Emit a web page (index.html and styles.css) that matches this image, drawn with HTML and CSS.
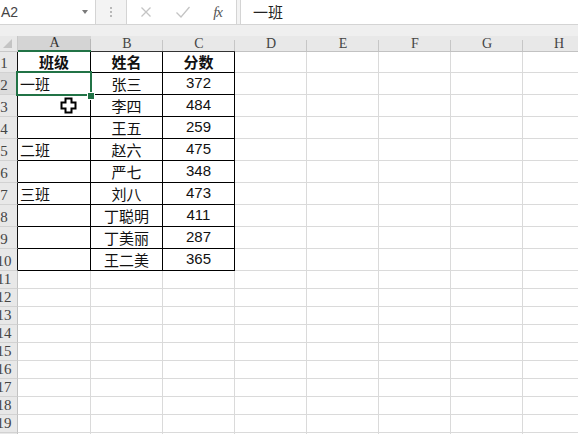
FILE: index.html
```html
<!DOCTYPE html>
<html lang="zh-CN">
<head>
<meta charset="utf-8">
<title>Excel</title>
<link rel="stylesheet" href="styles.css">
</head>
<body>
<div class="app">
  <div class="fbar">
    <div class="namebox"><span class="ref">A2</span><span class="dd"></span></div>
    <div class="grip"><i></i><i></i><i></i></div>
    <div class="fbtns">
      <svg class="ic" width="14" height="14" viewBox="0 0 14 14"><path d="M2.5 2.5l9 9M11.5 2.5l-9 9" stroke="#c4c4c4" stroke-width="1.3" fill="none"/></svg>
      <svg class="ic" width="16" height="14" viewBox="0 0 16 14"><path d="M1.5 7.5l4.5 4.5L14.5 2" stroke="#c4c4c4" stroke-width="1.3" fill="none"/></svg>
      <span class="fx">fx</span>
    </div>
    <div class="finput">一班</div>
  </div>
  <div class="band"></div>
  <div class="sheet">
    <div class="row hd">
      <div class="corner"><span class="tri"></span></div>
      <div class="ch sel">A</div><div class="ch tb">B</div><div class="ch tb">C</div><div class="ch">D</div><div class="ch">E</div><div class="ch">F</div><div class="ch">G</div><div class="ch">H</div>
    </div>
    <div class="row r1">
      <div class="rh tb"><span>1</span></div>
      <div class="c t ctr b">班级</div><div class="c t ctr b">姓名</div><div class="c t ctr b">分数</div><div class="c"></div><div class="c"></div><div class="c"></div><div class="c"></div><div class="c"></div>
    </div>
    <div class="row">
      <div class="rh tb rsel"><span>2</span></div>
      <div class="c t">一班</div><div class="c t ctr">张三</div><div class="c t ctr num">372</div><div class="c"></div><div class="c"></div><div class="c"></div><div class="c"></div><div class="c"></div>
    </div>
    <div class="row">
      <div class="rh tb"><span>3</span></div>
      <div class="c t"></div><div class="c t ctr">李四</div><div class="c t ctr num">484</div><div class="c"></div><div class="c"></div><div class="c"></div><div class="c"></div><div class="c"></div>
    </div>
    <div class="row">
      <div class="rh tb"><span>4</span></div>
      <div class="c t"></div><div class="c t ctr">王五</div><div class="c t ctr num">259</div><div class="c"></div><div class="c"></div><div class="c"></div><div class="c"></div><div class="c"></div>
    </div>
    <div class="row">
      <div class="rh tb"><span>5</span></div>
      <div class="c t">二班</div><div class="c t ctr">赵六</div><div class="c t ctr num">475</div><div class="c"></div><div class="c"></div><div class="c"></div><div class="c"></div><div class="c"></div>
    </div>
    <div class="row">
      <div class="rh tb"><span>6</span></div>
      <div class="c t"></div><div class="c t ctr">严七</div><div class="c t ctr num">348</div><div class="c"></div><div class="c"></div><div class="c"></div><div class="c"></div><div class="c"></div>
    </div>
    <div class="row">
      <div class="rh tb"><span>7</span></div>
      <div class="c t">三班</div><div class="c t ctr">刘八</div><div class="c t ctr num">473</div><div class="c"></div><div class="c"></div><div class="c"></div><div class="c"></div><div class="c"></div>
    </div>
    <div class="row">
      <div class="rh tb"><span>8</span></div>
      <div class="c t"></div><div class="c t ctr">丁聪明</div><div class="c t ctr num">411</div><div class="c"></div><div class="c"></div><div class="c"></div><div class="c"></div><div class="c"></div>
    </div>
    <div class="row">
      <div class="rh tb"><span>9</span></div>
      <div class="c t"></div><div class="c t ctr">丁美丽</div><div class="c t ctr num">287</div><div class="c"></div><div class="c"></div><div class="c"></div><div class="c"></div><div class="c"></div>
    </div>
    <div class="row">
      <div class="rh tb"><span>10</span></div>
      <div class="c t"></div><div class="c t ctr">王二美</div><div class="c t ctr num">365</div><div class="c"></div><div class="c"></div><div class="c"></div><div class="c"></div><div class="c"></div>
    </div>
    <div class="row sm"><div class="rh"><span>11</span></div><div class="c"></div><div class="c"></div><div class="c"></div><div class="c"></div><div class="c"></div><div class="c"></div><div class="c"></div><div class="c"></div></div>
    <div class="row sm"><div class="rh"><span>12</span></div><div class="c"></div><div class="c"></div><div class="c"></div><div class="c"></div><div class="c"></div><div class="c"></div><div class="c"></div><div class="c"></div></div>
    <div class="row sm"><div class="rh"><span>13</span></div><div class="c"></div><div class="c"></div><div class="c"></div><div class="c"></div><div class="c"></div><div class="c"></div><div class="c"></div><div class="c"></div></div>
    <div class="row sm"><div class="rh"><span>14</span></div><div class="c"></div><div class="c"></div><div class="c"></div><div class="c"></div><div class="c"></div><div class="c"></div><div class="c"></div><div class="c"></div></div>
    <div class="row sm"><div class="rh"><span>15</span></div><div class="c"></div><div class="c"></div><div class="c"></div><div class="c"></div><div class="c"></div><div class="c"></div><div class="c"></div><div class="c"></div></div>
    <div class="row sm"><div class="rh"><span>16</span></div><div class="c"></div><div class="c"></div><div class="c"></div><div class="c"></div><div class="c"></div><div class="c"></div><div class="c"></div><div class="c"></div></div>
    <div class="row sm"><div class="rh"><span>17</span></div><div class="c"></div><div class="c"></div><div class="c"></div><div class="c"></div><div class="c"></div><div class="c"></div><div class="c"></div><div class="c"></div></div>
    <div class="row sm"><div class="rh"><span>18</span></div><div class="c"></div><div class="c"></div><div class="c"></div><div class="c"></div><div class="c"></div><div class="c"></div><div class="c"></div><div class="c"></div></div>
    <div class="row sm"><div class="rh"><span>19</span></div><div class="c"></div><div class="c"></div><div class="c"></div><div class="c"></div><div class="c"></div><div class="c"></div><div class="c"></div><div class="c"></div></div>
    <div class="row sm"><div class="rh"><span>20</span></div><div class="c"></div><div class="c"></div><div class="c"></div><div class="c"></div><div class="c"></div><div class="c"></div><div class="c"></div><div class="c"></div></div>

    <div class="selbox"></div>
    <div class="handle"></div>
    <svg class="cursor" width="17" height="17" viewBox="0 0 17 17"><path d="M5.5 1.5h6v4h4v6h-4v4h-6v-4h-4v-6h4z" fill="#fff" stroke="#000" stroke-width="2" stroke-linejoin="miter"/></svg>
  </div>
</div>
</body>
</html>
```

FILE: styles.css
```css
html, body {
  margin: 0;
  padding: 0;
  background: #fff;
}
.app {
  width: 578px;
  height: 434px;
  overflow: hidden;
  position: relative;
  font-family: "Noto Sans CJK SC", "Liberation Sans", sans-serif;
}
.fbar {
  display: flex;
  height: 25px;
  background: #f3f3f3;
  box-sizing: border-box;
  border-bottom: 1px solid #d4d4d4;
}
.namebox {
  width: 96px;
  flex: none;
  background: #fff;
  border-right: 1px solid #d4d4d4;
  display: flex;
  align-items: center;
  justify-content: space-between;
  padding: 0 7px 0 1px;
  box-sizing: border-box;
}
.ref {
  font-family: "Liberation Sans", sans-serif;
  font-size: 14px;
  color: #444;
}
.dd {
  width: 0;
  height: 0;
  border-left: 3.5px solid transparent;
  border-right: 3.5px solid transparent;
  border-top: 4px solid #7a7a7a;
}
.grip {
  width: 30px;
  flex: none;
  display: flex;
  flex-direction: column;
  align-items: center;
  justify-content: center;
  gap: 2px;
}
.grip i {
  display: block;
  width: 2px;
  height: 2px;
  background: #b8b8b8;
}
.fbtns {
  width: 111px;
  flex: none;
  background: #fff;
  border-left: 1px solid #d4d4d4;
  border-right: 1px solid #d4d4d4;
  box-sizing: border-box;
  display: flex;
  align-items: center;
  padding: 0 14px 0 12px;
  justify-content: space-between;
}
.fx {
  font-family: "Liberation Serif", serif;
  font-style: italic;
  font-size: 15px;
  color: #555;
  letter-spacing: -1px;
}
.finput {
  flex: 1;
  margin-left: 3px;
  background: #fff;
  border-left: 1px solid #d4d4d4;
  font-size: 15px;
  color: #222;
  padding-left: 12px;
  line-height: 23px;
}
.band {
  height: 11px;
  background: #efefef;
}
.sheet {
  position: relative;
  display: flex;
  flex-direction: column;
}
.row {
  display: grid;
  grid-template-columns: 18px 73px 72px 72px 72px 72px 72px 72px 72px;
  height: 22px;
  flex: none;
}
.row.hd { height: 16px; }
.row.r1 { height: 21px; }
.row.sm { height: 18px; }
.corner {
  background: #e8e8e8;
  border-right: 1px solid #c8c8c8;
  border-bottom: 1px solid #c8c8c8;
  box-sizing: border-box;
  position: relative;
}
.tri {
  position: absolute;
  left: 3px;
  top: 3px;
  width: 0;
  height: 0;
  border-left: 9px solid transparent;
  border-bottom: 9px solid #c4c4c4;
}
.ch {
  background: linear-gradient(#c6c6c6, #c6c6c6) right bottom / 1px 11px no-repeat, #e8e8e8;
  border-bottom: 1px solid #c2c2c2;
  box-sizing: border-box;
  text-align: center;
  font-family: "Liberation Serif", serif;
  font-size: 14px;
  line-height: 15px;
  color: #444;
}
.ch.tb { border-bottom-color: #333; }
.ch.sel {
  background: linear-gradient(#b8b8b8, #b8b8b8) right bottom / 1px 11px no-repeat, #d4d4d4;
  border-bottom: 2px solid #217346;
  line-height: 14px;
  color: #333;
}
.rh {
  background: #e8e8e8;
  border-right: 1px solid #c2c2c2;
  border-bottom: 1px solid #d2d2d2;
  box-sizing: border-box;
  overflow: hidden;
  display: flex;
  align-items: flex-end;
  font-family: "Liberation Serif", serif;
  font-size: 15px;
  color: #444;
}
.rh span {
  display: block;
  flex: none;
  width: 26px;
  margin-left: -9px;
  text-align: center;
  line-height: 17px;
}
.row.sm .rh span { line-height: 17px; }
.rh.tb { border-right-color: #111; }
.rh.rsel { background: #dcdcdc; }
.c {
  border-right: 1px solid #dadada;
  border-bottom: 1px solid #dadada;
  box-sizing: border-box;
  font-size: 15px;
  line-height: 18px;
  color: #111;
  display: flex;
  align-items: flex-end;
  padding: 0 0 1px 2px;
  white-space: nowrap;
}
.c.t {
  border-right-color: #000;
  border-bottom-color: #000;
}
.c.ctr {
  justify-content: center;
  padding-left: 0;
}
.c.b { font-weight: bold; }
.c.num {
  font-family: "Liberation Sans", sans-serif;
  font-size: 15px;
  padding-bottom: 2px;
}
.selbox {
  position: absolute;
  left: 16px;
  top: 35px;
  width: 76px;
  height: 25px;
  box-sizing: border-box;
  border: 2px solid #217346;
}
.handle {
  position: absolute;
  left: 87px;
  top: 56px;
  width: 6px;
  height: 6px;
  background: #217346;
  border: 1px solid #fff;
}
.cursor {
  position: absolute;
  left: 60px;
  top: 61px;
}
```
